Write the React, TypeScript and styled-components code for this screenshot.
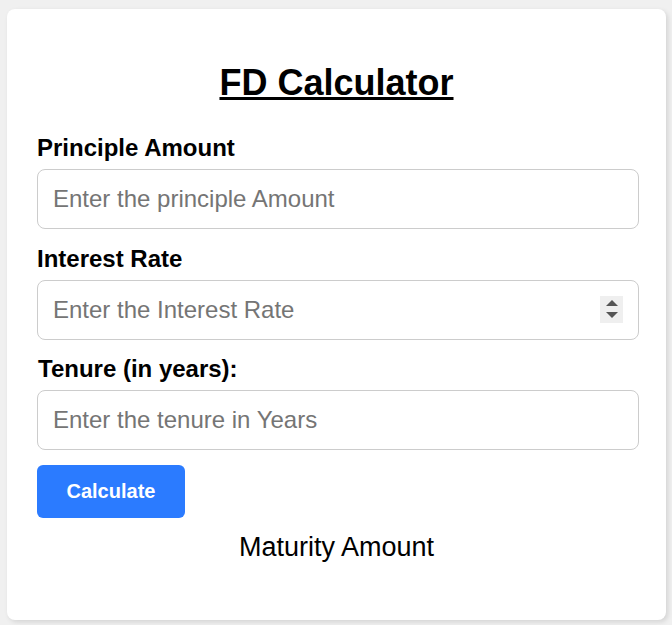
import React, { useState } from 'react'
import styled, { createGlobalStyle } from 'styled-components'

const GlobalStyle = createGlobalStyle`
    body {
        margin: 0;
        background: #f0f0f0;
        font-family: "Liberation Sans", Arial, sans-serif;
    }
`

const Page = styled.div`
    padding: 9px 6px 5px 7px;
`

const Card = styled.div`
    width: 659px;
    box-sizing: border-box;
    background: #fff;
    border-radius: 8px;
    box-shadow: 2px 2px 5px rgba(0, 0, 0, 0.12);
    padding: 53px 30px 57px 30px;
    display: flex;
    flex-direction: column;
`

const Title = styled.h1`
    margin: 0 0 30px;
    font-size: 36px;
    font-weight: bold;
    text-align: center;
    text-decoration: underline;
    color: #000;
`

const Field = styled.div`
    display: flex;
    flex-direction: column;
    gap: 7px;
    margin-bottom: 15.5px;
`

const Label = styled.label<{ $shift?: number }>`
    font-size: 24px;
    font-weight: bold;
    color: #000;
    padding-left: ${p => p.$shift || 0}px;
`

const InputWrap = styled.div`
    position: relative;
`

// inputs run 3px past the card padding, like the original
const Input = styled.input`
    width: calc(100% + 3px);
    height: 60px;
    box-sizing: border-box;
    border: 1px solid #ccc;
    border-radius: 8px;
    padding: 0 15px;
    font-size: 24px;
    font-family: inherit;
    color: #000;
    outline: none;

    &::placeholder {
        color: #757575;
    }

    &::-webkit-inner-spin-button,
    &::-webkit-outer-spin-button {
        -webkit-appearance: none;
        margin: 0;
    }
`

const Spinner = styled.div`
    position: absolute;
    right: 13px;
    top: 16px;
    width: 23px;
    height: 27px;
    background: #efefef;
    display: flex;
    flex-direction: column;
    align-items: center;
    justify-content: center;
    gap: 6px;
`

const Arrow = styled.div<{ $down?: boolean }>`
    width: 0;
    height: 0;
    border-left: 6px solid transparent;
    border-right: 6px solid transparent;
    ${p => p.$down ? 'border-top: 6px solid #555;' : 'border-bottom: 6px solid #555;'}
`

const Button = styled.button`
    align-self: flex-start;
    margin-top: -1px;
    height: 53px;
    padding: 0 29.5px;
    border: none;
    border-radius: 6px;
    background: #2b7bff;
    color: #fff;
    font-family: inherit;
    font-size: 20px;
    font-weight: bold;
    cursor: pointer;
`

const Result = styled.p`
    margin: 14px 0 0;
    font-size: 27px;
    text-align: center;
    color: #000;
`

export default function App() {
    const [principle, setPrinciple] = useState('')
    const [rate, setRate] = useState('')
    const [tenure, setTenure] = useState('')

    return (
        <>
            <GlobalStyle />
            <Page>
                <Card>
                    <Title>FD Calculator</Title>

                    <Field>
                        <Label>Principle Amount</Label>
                        <Input
                            type="text"
                            placeholder="Enter the principle Amount"
                            value={principle}
                            onChange={e => setPrinciple(e.target.value)}
                        />
                    </Field>

                    <Field>
                        <Label>Interest Rate</Label>
                        <InputWrap>
                            <Input
                                type="number"
                                placeholder="Enter the Interest Rate"
                                value={rate}
                                onChange={e => setRate(e.target.value)}
                            />
                            {/* drawn spin buttons */}
                            <Spinner>
                                <Arrow />
                                <Arrow $down />
                            </Spinner>
                        </InputWrap>
                    </Field>

                    <Field>
                        <Label $shift={1}>Tenure (in years):</Label>
                        <Input
                            type="text"
                            placeholder="Enter the tenure in Years"
                            value={tenure}
                            onChange={e => setTenure(e.target.value)}
                        />
                    </Field>

                    <Button>Calculate</Button>
                    <Result>Maturity Amount</Result>
                </Card>
            </Page>
        </>
    )
}
